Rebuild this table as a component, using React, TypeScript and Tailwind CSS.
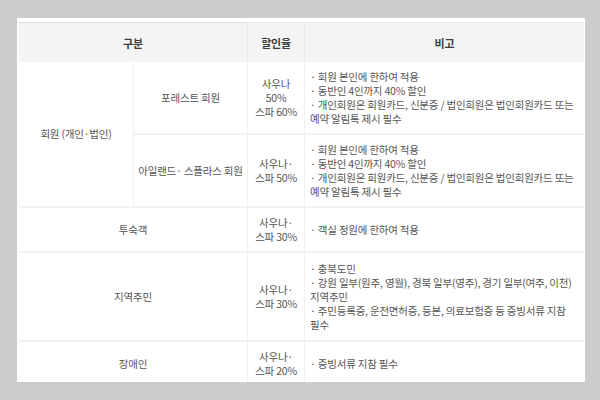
const font = { fontFamily: '"Noto Sans CJK KR", "Noto Sans", sans-serif' }

type Row = {
  rate: string[]
  notes: string[]
}

function Notes({ notes }: { notes: string[] }) {
  return (
    <div className="text-left break-keep">
      {notes.map((n, i) => (
        <div key={i}>· {n}</div>
      ))}
    </div>
  )
}

function Rate({ lines }: { lines: string[] }) {
  return (
    <div>
      {lines.map((l, i) => (
        <div key={i}>{l}</div>
      ))}
    </div>
  )
}

const memberNotes = [
  '회원 본인에 한하여 적용',
  '동반인 4인까지 40% 할인',
  '개인회원은 회원카드, 신분증 / 법인회원은 법인회원카드 또는 예약 알림톡 제시 필수',
]

const forest: Row = { rate: ['사우나', '50%', '스파 60%'], notes: memberNotes }
const island: Row = { rate: ['사우나·', '스파 50%'], notes: memberNotes }

const td = 'border-b-2 border-[#f1f1f1] align-middle text-center'
const vline = 'border-l border-[#ebebeb]'
const th = 'border-t border-[#dcdcdc] bg-[#f4f4f4] font-bold text-[11px] text-[#3d3d3d]'

export default function App() {
  return (
    <div className="w-[600px] h-[400px] bg-[#cccccc] pt-[18px] pl-[17px]" style={font}>
      <div className="w-[568px] h-[364px] bg-white overflow-hidden pt-[4px] pl-[2px]">
        <table className="w-[565px] table-fixed border-separate border-spacing-0 text-[10.5px] leading-[14px] text-[#555] tracking-[-0.02em]">
          <colgroup>
            <col className="w-[114px]" />
            <col className="w-[114px]" />
            <col className="w-[57px]" />
            <col className="w-[280px]" />
          </colgroup>
          <thead>
            <tr className="h-[40px]">
              <th colSpan={2} className={th}>
                구분
              </th>
              <th className={`${th} ${vline}`}>할인율</th>
              <th className={`${th} ${vline}`}>비고</th>
            </tr>
          </thead>
          <tbody>
            <tr className="h-[73px]">
              <td rowSpan={2} className={td}>
                회원 (개인·법인)
              </td>
              <td className={`${td} ${vline}`}>포레스트 회원</td>
              <td className={`${td} ${vline}`}>
                <Rate lines={forest.rate} />
              </td>
              <td className={`${td} ${vline} pl-[5px] pr-[4px]`}>
                <Notes notes={forest.notes} />
              </td>
            </tr>
            <tr className="h-[73px]">
              <td className={`${td} ${vline}`}>아일랜드· 스플라스 회원</td>
              <td className={`${td} ${vline}`}>
                <Rate lines={island.rate} />
              </td>
              <td className={`${td} ${vline} pl-[5px] pr-[4px]`}>
                <Notes notes={island.notes} />
              </td>
            </tr>
            <tr className="h-[45px]">
              <td colSpan={2} className={td}>
                투숙객
              </td>
              <td className={`${td} ${vline}`}>
                <Rate lines={['사우나·', '스파 30%']} />
              </td>
              <td className={`${td} ${vline} pl-[5px] pr-[4px]`}>
                <Notes notes={['객실 정원에 한하여 적용']} />
              </td>
            </tr>
            <tr className="h-[89px]">
              <td colSpan={2} className={td}>
                지역주민
              </td>
              <td className={`${td} ${vline}`}>
                <Rate lines={['사우나·', '스파 30%']} />
              </td>
              <td className={`${td} ${vline} pl-[5px] pr-[4px]`}>
                <Notes
                  notes={[
                    '충북도민',
                    '강원 일부(원주, 영월), 경북 일부(영주), 경기 일부(여주, 이천) 지역주민',
                    '주민등록증, 운전면허증, 등본, 의료보험증 등 증빙서류 지참 필수',
                  ]}
                />
              </td>
            </tr>
            <tr className="h-[45px]">
              <td colSpan={2} className={td}>
                장애인
              </td>
              <td className={`${td} ${vline}`}>
                <Rate lines={['사우나·', '스파 20%']} />
              </td>
              <td className={`${td} ${vline} pl-[5px] pr-[4px]`}>
                <Notes notes={['증빙서류 지참 필수']} />
              </td>
            </tr>
          </tbody>
        </table>
      </div>
    </div>
  )
}
